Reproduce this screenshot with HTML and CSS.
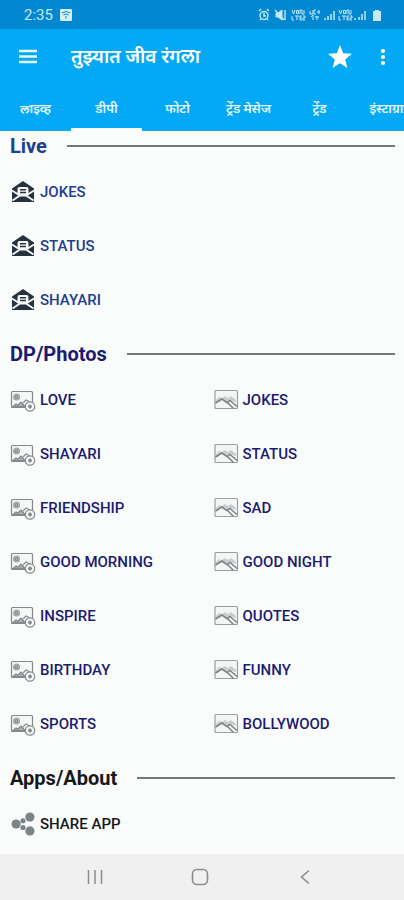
FILE: index.html
```
<!DOCTYPE html>
<html lang="mr">
<head>
<meta charset="utf-8">
<meta name="viewport" content="width=device-width, initial-scale=1">
<title>तुझ्यात जीव रंगला</title>
<link rel="stylesheet" href="styles.css">
</head>
<body>
<svg class="sprite" aria-hidden="true">
  <symbol id="mail" viewBox="0 0 24 24">
    <path fill="#26323f" d="M1 8.500 12 1l11 7.500V22H1z"/>
    <path fill="#fafafa" d="M6.500 9q0-2 2-2h7q2 0 2 2v4.500L14 16h-4l-3.500-2.500z"/>
    <path stroke="#26323f" stroke-width="1.400" d="M9 9.700h6M9 12.500h6"/>
    <path fill="none" stroke="#fafafa" stroke-width="1.800" d="m1 10.500 7 4.500M23 10.500 16 15M1.500 20.500 9 15.500h6l7.500 5"/>
  </symbol>
  <symbol id="picture-add" viewBox="0 0 26 24">
    <g fill="none" stroke="#85898b" stroke-width="1.200">
      <rect x="1.500" y="3.500" width="21" height="16" rx="1" fill="#f6f7f7"/>
      <circle cx="6.500" cy="9" r="3" fill="#c4c8c9" stroke="#a0a5a7"/>
      <circle cx="6.500" cy="9" r="1.300"/>
      <path fill="#aaaeaf" d="m3 18.500 3-2.500 2 1 3-3 4 4.500z"/>
      <path d="m13 15 3-3 4 2"/>
      <circle cx="20" cy="18.500" r="4.700" fill="#f6f7f7"/>
      <path stroke-width="1.800" d="M20 16.500v4M18 18.500h4"/>
    </g>
  </symbol>
  <symbol id="picture" viewBox="0 0 26 24">
    <g fill="none" stroke="#9a9fa1" stroke-width="1.200">
      <rect x="2" y="2.500" width="22.500" height="18" rx="1" fill="#f4f5f5"/>
      <path fill="#c9cdce" stroke="none" d="m3 12 3-3 3 1 3-2 3 2 3-2 5 4v2l-6-2-4 3-5-3-5 3z"/>
      <path stroke="#7d8386" stroke-width="1.500" d="m2.500 15 6.500-4 5 3.500 3-2 7 6M14.500 14.500l6 6"/>
    </g>
  </symbol>
  <symbol id="share" viewBox="0 0 26 26">
    <g fill="#7c8585">
      <circle cx="5.500" cy="13" r="5"/><circle cx="20.500" cy="5.500" r="5"/><circle cx="20.500" cy="20.500" r="5"/>
      <circle cx="13" cy="9.500" r="2.800"/><circle cx="13" cy="16.800" r="2.800"/>
    </g>
  </symbol>
</svg>
<div class="screen">
  <div class="status">
    <span class="clock">2:35</span>
    <svg class="cast" viewBox="0 0 12 12"><rect width="12" height="12" rx="1" fill="#d6effc"/><path d="M2 4q4-3 8 0M3.500 6q2.500-2 5 0M6 7v2.500" fill="none" stroke="#0288d1"/></svg>
    <svg class="signals" viewBox="0 0 126 14" fill="none" stroke="#c5e8fa">
      <g stroke-width="1.500"><circle cx="6" cy="7.500" r="4"/><path d="M6 5v3h2M1 3l2-2M9 1l2 2M2 12l1-1M10 12l-1-1"/></g>
      <path fill="#c5e8fa" d="M18 5h2l4-3v10l-4-3h-2z"/><path stroke-width="1.400" d="m17 2 9 10M27 2v10"/>
      <g stroke-width="1"><path d="m34 2 1.500 4L37 2M38.500 2.500h2v3h-2zM42 6V2h2v4h2V2M34 8v4h2M37 8h4M39 8v4M44 8h-2v4h2M42 10h2M45 8h2v2h-2v2h2"/>
      <path d="M52 3v3h3M55 2v4M58 2h-2v4h2M59 4h3M61 2v4M53 9l2-2v5M59 8v4M57 9h4"/>
      <path d="m81 2 1.500 4L84 2M85.500 2.500h2v3h-2zM89 6V2h2v4h2V2M81 8v4h2M84 8h4M86 8v4M91 8h-2v4h2M89 10h2M92 8h2v2h-2v2h2"/></g>
      <path stroke-width="1.500" d="M67 12v-2M70 12V8M73 12V6M76 12V3M97 12v-2M101 12V9M104 12V6M107 12V3"/>
      <path fill="#c5e8fa" stroke="none" d="M115 3h2V2h4v1h2v10h-8z"/>
    </svg>
  </div>
  <header class="bar">
    <button class="icon-btn menu" aria-label="Menu"><svg viewBox="0 0 20 16" width="20" height="16"><path stroke="#e8f7ff" stroke-width="2.400" d="M1 2h18M1 7.500h18M1 13h18"/></svg></button>
    <h1>तुझ्यात जीव रंगला</h1>
    <button class="icon-btn" aria-label="Favourite"><svg viewBox="0 0 24 24" width="24" height="24"><path fill="#fff" d="m12 0 3.200 8.200 8.800.6-6.800 5.600 2.200 8.600-7.400-4.800L4.600 23l2.200-8.600L0 8.800l8.800-.6z"/></svg></button>
    <button class="icon-btn more" aria-label="More"><svg viewBox="0 0 6 18" width="6" height="18" fill="#fff"><circle cx="3" cy="3" r="2.100"/><circle cx="3" cy="9" r="2.100"/><circle cx="3" cy="15" r="2.100"/></svg></button>
  </header>
  <nav class="tabs">
    <a href="#live">लाइव्ह</a><a href="#dp" class="active">डीपी</a><a href="#photo">फोटो</a><a href="#trend-message">ट्रेंड मेसेज</a><a href="#trend">ट्रेंड</a><a href="#insta">इंस्टाग्राम</a>
  </nav>
  <main>
    <section id="live" class="live">
      <h2>Live</h2>
      <div class="list">
        <a href="#jokes"><svg><use href="#mail"/></svg>JOKES</a>
        <a href="#status"><svg><use href="#mail"/></svg>STATUS</a>
        <a href="#shayari"><svg><use href="#mail"/></svg>SHAYARI</a>
      </div>
    </section>
    <section id="dp" class="photos">
      <h2>DP/Photos</h2>
      <div class="list pair">
        <a href="#love"><svg><use href="#picture-add"/></svg>LOVE</a>
        <a href="#dp-jokes"><svg><use href="#picture"/></svg>JOKES</a>
        <a href="#dp-shayari"><svg><use href="#picture-add"/></svg>SHAYARI</a>
        <a href="#dp-status"><svg><use href="#picture"/></svg>STATUS</a>
        <a href="#friendship"><svg><use href="#picture-add"/></svg>FRIENDSHIP</a>
        <a href="#sad"><svg><use href="#picture"/></svg>SAD</a>
        <a href="#morning"><svg><use href="#picture-add"/></svg>GOOD MORNING</a>
        <a href="#night"><svg><use href="#picture"/></svg>GOOD NIGHT</a>
        <a href="#inspire"><svg><use href="#picture-add"/></svg>INSPIRE</a>
        <a href="#quotes"><svg><use href="#picture"/></svg>QUOTES</a>
        <a href="#birthday"><svg><use href="#picture-add"/></svg>BIRTHDAY</a>
        <a href="#funny"><svg><use href="#picture"/></svg>FUNNY</a>
        <a href="#sports"><svg><use href="#picture-add"/></svg>SPORTS</a>
        <a href="#bollywood"><svg><use href="#picture"/></svg>BOLLYWOOD</a>
      </div>
    </section>
    <section class="about">
      <h2>Apps/About</h2>
      <div class="list">
        <a href="#share-app"><svg><use href="#share"/></svg>SHARE APP</a>
      </div>
    </section>
  </main>
  <footer class="system">
    <button class="icon-btn" aria-label="Recent apps"><svg viewBox="0 0 18 18" width="18" height="18"><path stroke="#8c8c8c" stroke-width="1.500" d="M2.500 2v14M9 2v14M15.500 2v14"/></svg></button>
    <button class="icon-btn" aria-label="Home"><svg viewBox="0 0 18 18" width="18" height="18"><rect x="1.500" y="1.500" width="15" height="15" rx="4.500" fill="none" stroke="#8c8c8c" stroke-width="1.600"/></svg></button>
    <button class="icon-btn" aria-label="Back"><svg viewBox="0 0 18 18" width="18" height="18"><path fill="none" stroke="#8c8c8c" stroke-width="1.600" d="M13 2.500 5.500 9l7.500 6.500"/></svg></button>
  </footer>
</div>
</body>
</html>
```
FILE: styles.css
```
* { box-sizing: border-box; }
body {
  margin: 0;
  font-family: Roboto, "Noto Sans", "Noto Sans Devanagari", sans-serif;
  background: #fafbfb;
}
.sprite { position: absolute; width: 0; height: 0; }
.screen { display: flex; flex-direction: column; min-height: 100vh; }
a { color: inherit; text-decoration: none; }
svg { display: block; flex: none; }

.status {
  display: flex;
  align-items: center;
  height: 29px;
  padding: 0 20px 0 24px;
  background: #0288d1;
  color: #c5e8fa;
}
.clock { font-size: 15px; line-height: 16px; }
.cast { width: 12px; height: 12px; margin-left: 7px; }
.signals { width: 126px; height: 14px; margin-left: auto; }

.bar {
  display: flex;
  align-items: center;
  height: 56px;
  padding: 0 16px;
  background: #03a9f4;
  color: #fff;
}
h1 { flex: 1; margin: 0; font-size: 19px; line-height: 28px; font-weight: 600; }
.icon-btn {
  display: flex;
  align-items: center;
  justify-content: center;
  padding: 2px;
  border: 0;
  background: none;
}
.menu { margin-right: 31px; }
.more { margin-left: 24px; }

.tabs {
  display: flex;
  height: 46px;
  overflow: hidden;
  background: #03a9f4;
  color: #e4f6ff;
  font-size: 13px;
  font-weight: 600;
}
.tabs a {
  display: flex;
  flex: none;
  align-items: center;
  justify-content: center;
  min-width: 71px;
  padding: 3px 11px 0;
  border-bottom: 3px solid transparent;
  white-space: nowrap;
}
.tabs .active { border-color: #fafbfb; }

main { flex: 1; padding: 0 9px 0 10px; }
section + section { margin-top: 12px; }
h2 {
  display: flex;
  align-items: center;
  gap: 20px;
  height: 30px;
  margin: 0 0 4px;
  font-size: 20px;
  line-height: 28px;
  font-weight: 700;
}
h2::after { content: ""; flex: 1; height: 2px; background: #77787a; }
.live { color: #213f8f; }
.photos { color: #1b1b70; }
.about { color: #151819; }
.list a {
  display: flex;
  align-items: center;
  gap: 4px;
  height: 54px;
  font-size: 15px;
  font-weight: 500;
}
.list svg { width: 26px; height: 24px; }
.pair { display: grid; grid-template-columns: 1fr 1fr; column-gap: 20px; }

.system {
  display: flex;
  align-items: center;
  justify-content: space-between;
  height: 46px;
  padding: 0 88px 0 84px;
  background: #f0f0f0;
}
```
